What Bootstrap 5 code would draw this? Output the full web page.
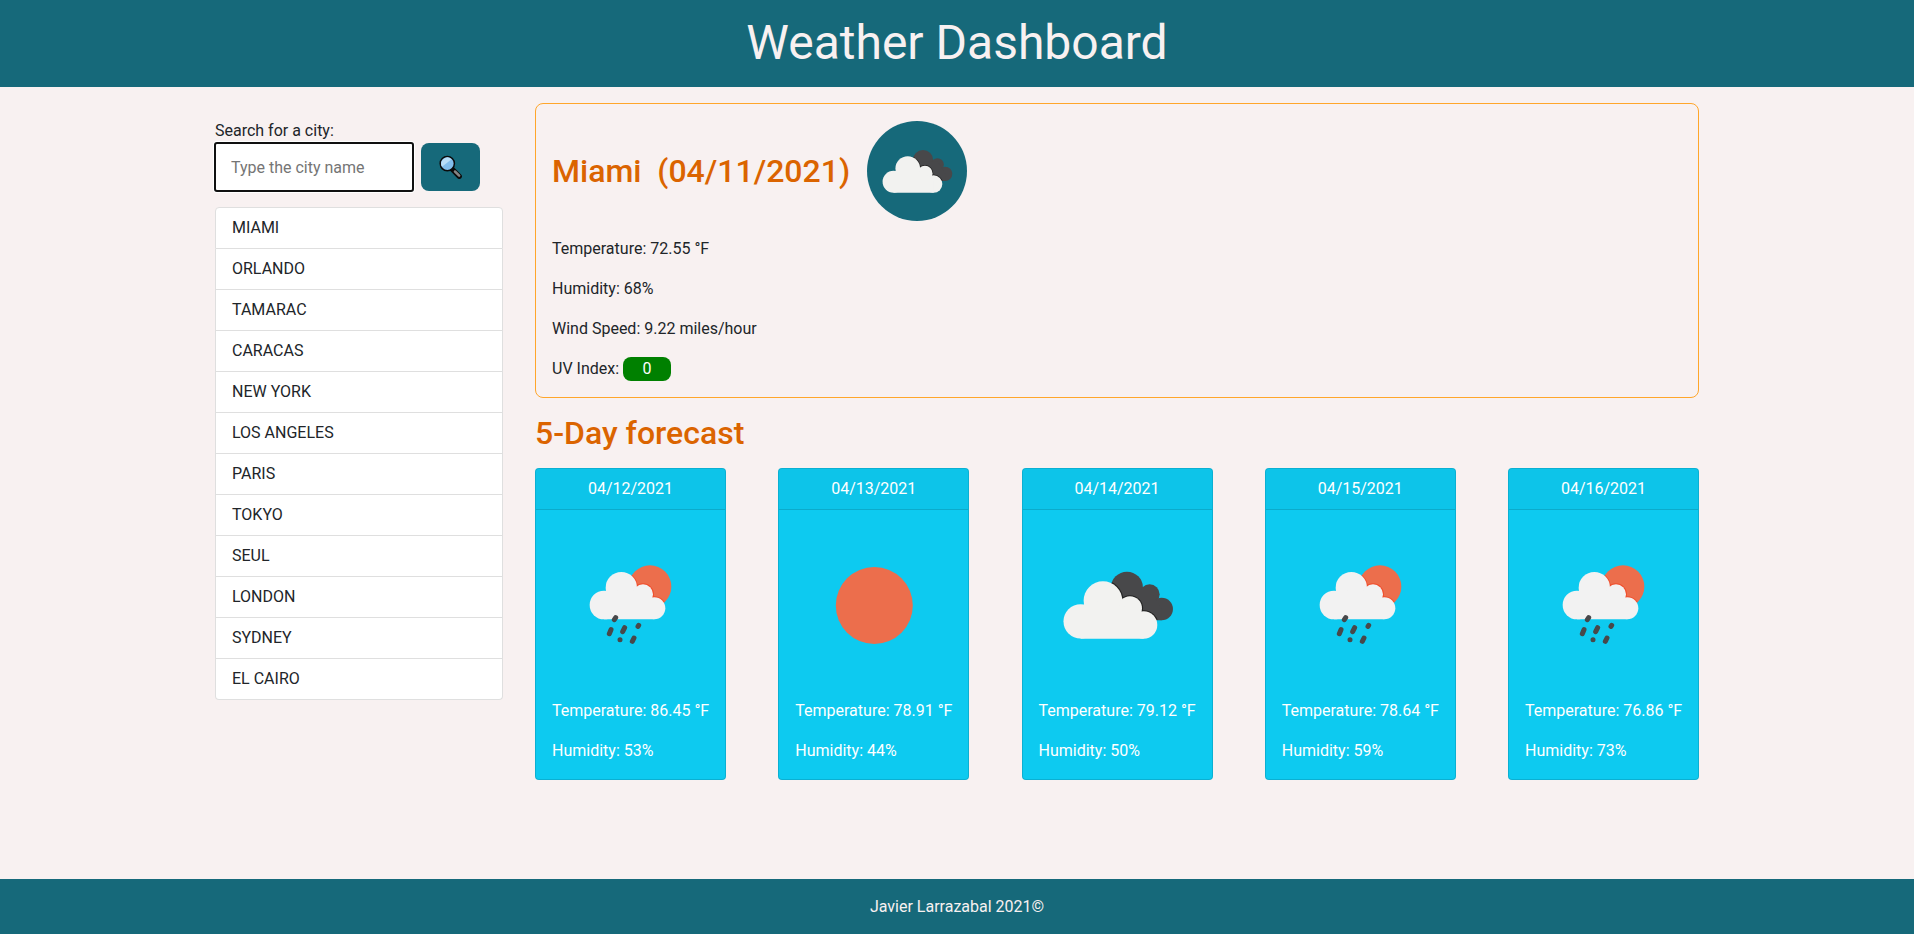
<!DOCTYPE html>
<html lang="en">
<head>
<meta charset="utf-8">
<meta name="viewport" content="width=device-width, initial-scale=1">
<title>Weather Dashboard</title>
<link href="https://cdn.jsdelivr.net/npm/bootstrap@5.3.0/dist/css/bootstrap.min.css" rel="stylesheet">
<style>
  :root { --teal: #16697a; --amber: #ffa62b; --rust: #db6400; --paper: #f8f1f1; }
  body { font-family: Roboto, sans-serif; background: var(--paper); color: #212529; }
  .teal-bar { background: var(--teal); color: var(--paper); }
  .site-head { height: 87px; padding-bottom: 2px; }
  .site-head h1 { font-size: 48px; font-weight: 400; line-height: 1.2; }
  .site-foot { height: 55px; }
  .page-wrap { width: 1484px; gap: 32px; }
  .side-col { width: 288px; padding-top: 16px; }
  .city-input { width: 198px; height: 48px; border: 0; border-radius: 2px; padding: 0 16px; background: #fff; outline: 2px solid #101010; outline-offset: -1px; box-shadow: 0 0 0 2px #fff; }
  .city-input::placeholder { color: #757575; opacity: 1; }
  .search-btn { width: 59px; height: 48px; border: 0; border-radius: 8px; background: var(--teal); padding: 0; }
  .city-list { --bs-list-group-border-color: #dfdfdf; --bs-list-group-border-radius: 4px; --bs-list-group-color: #212529; --bs-list-group-bg: #fff; }
  .today { border: 1px solid var(--amber); border-radius: 8px; padding: 17px 16px 0; height: 295px; }
  .rust { color: var(--rust); font-size: 32px; font-weight: 500; line-height: 1.2; }
  .round-icon { width: 100px; height: 100px; border-radius: 50%; background: var(--teal); margin-left: 17px; }
  .uv { display: inline-block; width: 48px; border-radius: 8px; background: green; color: #fff; text-align: center; }
  .day { --bs-card-border-radius: 4px; --bs-card-inner-border-radius: 3px; --bs-card-border-color: rgba(0,0,0,.125); width: 191px; height: 312px; color: #fff; --bs-card-cap-color: #fff; background-color: #0dcaf0; }
  .day svg { width: 157px; height: 157px; display: block; }
  .day .card-body { padding: 16px 0 0 16px; white-space: nowrap; }
</style>
</head>
<body class="d-flex flex-column min-vh-100">
<svg width="0" height="0" class="position-absolute" aria-hidden="true">
  <defs>
    <g id="backCloud"><circle cx="260" cy="143" r="48"/><circle cx="328" cy="163" r="30"/><circle cx="364" cy="207" r="34"/><path d="M240 150H330L364 207V241H250Z"/></g>
    <g id="frontCloud"><circle cx="121" cy="244" r="51.500"/><circle cx="188" cy="182" r="58"/><circle cx="269" cy="205" r="36"/><circle cx="310" cy="255" r="41"/><path d="M121 200L188 180L269 205L310 240V296H121Z"/></g>
    <clipPath id="backClip"><circle cx="260" cy="143" r="48"/><circle cx="328" cy="163" r="30"/><circle cx="364" cy="207" r="34"/><path d="M240 150H330L364 207V241H250Z"/></clipPath>
    <clipPath id="sunClip"><circle cx="270" cy="140" r="64"/></clipPath>
    <g id="rainCloud"><circle cx="132" cy="195" r="43"/><circle cx="184" cy="143" r="47"/><circle cx="249" cy="163" r="30"/><circle cx="283" cy="205" r="33"/><path d="M132 160L184 150L249 165L283 190V238H132Z"/></g>
    <symbol id="cloudy" viewBox="0 0 157 157">
      <g transform="translate(1.300 14) scale(.33333)">
        <use href="#backCloud" fill="#48484a"/>
        <g clip-path="url(#backClip)"><use href="#frontCloud" fill="#222" stroke="#222" stroke-width="7"/></g>
        <use href="#frontCloud" fill="#f2f2f0"/>
      </g>
    </symbol>
    <symbol id="sunny" viewBox="0 0 157 157"><circle cx="79.300" cy="79.500" r="38.500" fill="#ec6e4c"/></symbol>
    <symbol id="rain" viewBox="0 0 157 157">
      <g transform="translate(8 14) scale(.33333)">
        <circle cx="270" cy="140" r="64" fill="#ec6e4c"/>
        <g clip-path="url(#sunClip)"><use href="#rainCloud" fill="#f04e2c" stroke="#f04e2c" stroke-width="6"/></g>
        <use href="#rainCloud" fill="#f2f2f2"/>
        <path d="M167 233L163 239M153 269L148 281M194 263L188 275M236 256L234 259M180 299h.1M222 294L217 304" stroke="#48484a" stroke-width="15" stroke-linecap="round"/>
      </g>
    </symbol>
  </defs>
</svg>

<header class="teal-bar site-head d-flex justify-content-center align-items-center">
  <h1 class="mb-0">Weather Dashboard</h1>
</header>

<main class="page-wrap d-flex mx-auto pt-3 flex-grow-1">
  <aside class="side-col flex-shrink-0">
    <label for="city" class="d-block">Search for a city:</label>
    <div class="d-flex mb-3 gap-2 align-items-start">
      <input id="city" class="city-input" type="text" placeholder="Type the city name">
      <button class="search-btn" type="button" aria-label="Search">
        <svg width="24" height="24" viewBox="0 0 24 24">
          <path d="M13.500 14.500L20.300 21.300" stroke="#0b0b0b" stroke-width="5.200" stroke-linecap="round"/>
          <path d="M16 16.500L20.200 20.700" stroke="#858585" stroke-width="2.500" stroke-linecap="round"/>
          <circle cx="8.300" cy="8.600" r="7.100" fill="#83beec" stroke="#0b0b0b" stroke-width="1.500"/>
          <path d="M3 11.800A6.200 6.200 0 0 1 12.600 4.200Z" fill="#b9def8"/>
        </svg>
      </button>
    </div>
    <ul class="list-group city-list">
      <li class="list-group-item">MIAMI</li>
      <li class="list-group-item">ORLANDO</li>
      <li class="list-group-item">TAMARAC</li>
      <li class="list-group-item">CARACAS</li>
      <li class="list-group-item">NEW YORK</li>
      <li class="list-group-item">LOS ANGELES</li>
      <li class="list-group-item">PARIS</li>
      <li class="list-group-item">TOKYO</li>
      <li class="list-group-item">SEUL</li>
      <li class="list-group-item">LONDON</li>
      <li class="list-group-item">SYDNEY</li>
      <li class="list-group-item">EL CAIRO</li>
    </ul>
  </aside>

  <section class="flex-grow-1">
    <div class="today">
      <div class="d-flex align-items-center mb-3">
        <h2 class="rust mb-0">Miami&nbsp; (04/11/2021)</h2>
        <svg class="round-icon"><use href="#cloudy"/></svg>
      </div>
      <p>Temperature: 72.55 °F</p>
      <p>Humidity: 68%</p>
      <p>Wind Speed: 9.22 miles/hour</p>
      <p class="mb-0">UV Index: <span class="uv">0</span></p>
    </div>
    <h2 class="rust my-3">5-Day forecast</h2>
    <div class="d-flex justify-content-between">
      <div class="card day">
        <div class="card-header text-center">04/12/2021</div>
        <div class="card-body"><svg class="mb-3"><use href="#rain"/></svg><p>Temperature: 86.45 °F</p><p class="mb-0">Humidity: 53%</p></div>
      </div>
      <div class="card day">
        <div class="card-header text-center">04/13/2021</div>
        <div class="card-body"><svg class="mb-3"><use href="#sunny"/></svg><p>Temperature: 78.91 °F</p><p class="mb-0">Humidity: 44%</p></div>
      </div>
      <div class="card day">
        <div class="card-header text-center">04/14/2021</div>
        <div class="card-body"><svg class="mb-3"><use href="#cloudy"/></svg><p>Temperature: 79.12 °F</p><p class="mb-0">Humidity: 50%</p></div>
      </div>
      <div class="card day">
        <div class="card-header text-center">04/15/2021</div>
        <div class="card-body"><svg class="mb-3"><use href="#rain"/></svg><p>Temperature: 78.64 °F</p><p class="mb-0">Humidity: 59%</p></div>
      </div>
      <div class="card day">
        <div class="card-header text-center">04/16/2021</div>
        <div class="card-body"><svg class="mb-3"><use href="#rain"/></svg><p>Temperature: 76.86 °F</p><p class="mb-0">Humidity: 73%</p></div>
      </div>
    </div>
  </section>
</main>

<footer class="teal-bar site-foot d-flex justify-content-center align-items-center">Javier Larrazabal 2021©</footer>
<script src="https://cdn.jsdelivr.net/npm/bootstrap@5.3.0/dist/js/bootstrap.bundle.min.js"></script>
</body>
</html>
